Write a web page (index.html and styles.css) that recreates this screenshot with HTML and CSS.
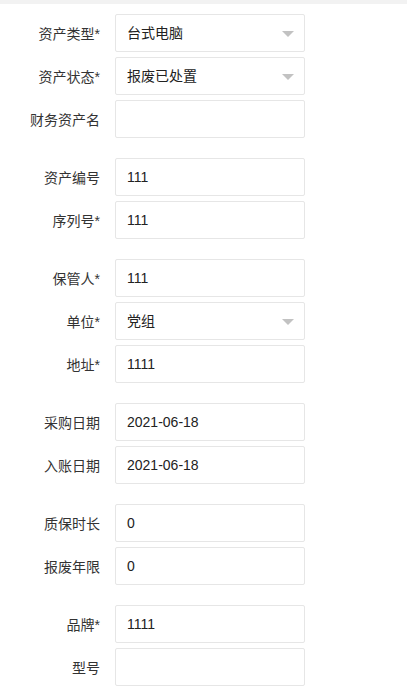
FILE: index.html
```html
<!DOCTYPE html>
<html lang="zh-CN">
<head>
  <meta charset="UTF-8" />
  <meta name="viewport" content="width=device-width, initial-scale=1" />
  <title>资产信息</title>
  <link rel="stylesheet" href="styles.css">
</head>
<body>
  <div class="topbar"></div>

  <div class="form">
    <!-- 基本信息 -->
    <div class="group">
      <div class="row">
        <label>资产类型*</label>
        <div class="field select">台式电脑<span class="arrow"></span></div>
      </div>
      <div class="row">
        <label>资产状态*</label>
        <div class="field select">报废已处置<span class="arrow"></span></div>
      </div>
      <div class="row">
        <label>财务资产名</label>
        <div class="field"></div>
      </div>
    </div>

    <div class="group">
      <div class="row">
        <label>资产编号</label>
        <div class="field">111</div>
      </div>
      <div class="row">
        <label>序列号*</label>
        <div class="field">111</div>
      </div>
    </div>

    <div class="group">
      <div class="row">
        <label>保管人*</label>
        <div class="field">111</div>
      </div>
      <div class="row">
        <label>单位*</label>
        <div class="field select">党组<span class="arrow"></span></div>
      </div>
      <div class="row">
        <label>地址*</label>
        <div class="field">1111</div>
      </div>
    </div>

    <div class="group">
      <div class="row">
        <label>采购日期</label>
        <div class="field">2021-06-18</div>
      </div>
      <div class="row">
        <label>入账日期</label>
        <div class="field">2021-06-18</div>
      </div>
    </div>

    <div class="group">
      <div class="row">
        <label>质保时长</label>
        <div class="field">0</div>
      </div>
      <div class="row">
        <label>报废年限</label>
        <div class="field">0</div>
      </div>
    </div>

    <div class="group">
      <div class="row">
        <label>品牌*</label>
        <div class="field">1111</div>
      </div>
      <div class="row">
        <label>型号</label>
        <div class="field"></div>
      </div>
    </div>
  </div>
</body>
</html>
```

FILE: styles.css
```css
body {
  margin: 0;
  background: #fff;
  font-family: "Liberation Sans", "Noto Sans CJK SC", sans-serif;
  font-size: 14px;
  color: #333;
}

.topbar {
  height: 4px;
  background: #f2f2f2;
}

.form {
  padding-top: 10px;
}

.group {
  margin-bottom: 20px;
}

.row {
  display: flex;
  align-items: center;
  margin-bottom: 5px;
}

.row label {
  width: 100px;
  text-align: right;
  padding-right: 15px;
  color: #333;
}

.field {
  position: relative;
  width: 190px;
  height: 38px;
  box-sizing: border-box;
  border: 1px solid #e6e6e6;
  border-radius: 2px;
  padding-left: 11px;
  line-height: 36px;
  color: #222;
  background: #fff;
}

.select .arrow {
  position: absolute;
  right: 10px;
  top: 16px;
  width: 0;
  height: 0;
  border-left: 6px solid transparent;
  border-right: 6px solid transparent;
  border-top: 6px solid #c2c2c2;
}
```
